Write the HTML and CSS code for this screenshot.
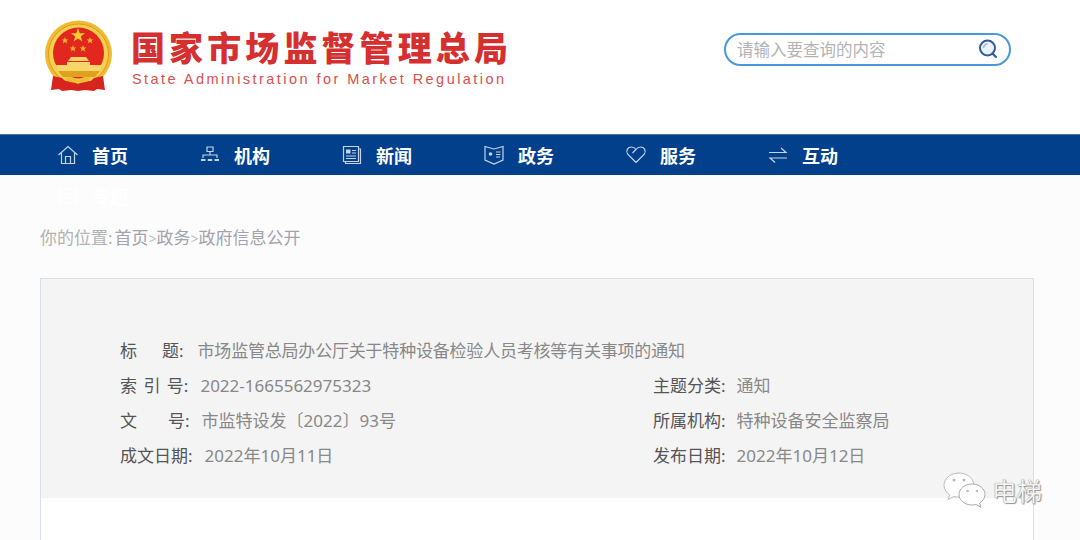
FILE: index.html
```html
<!DOCTYPE html>
<html lang="zh-CN">
<head>
    <meta charset="UTF-8">
    <title>国家市场监督管理总局</title>
    <link rel="stylesheet" href="styles.css">
</head>
<body>
    <header class="site-header">
        <div class="brand">
            <!-- national emblem, viewBox is in page coordinates -->
            <svg class="emblem" viewBox="44 19 70 74" width="70" height="74">
                <circle cx="78.500" cy="54" r="33.500" fill="#eebb33"/>
                <circle cx="78.500" cy="54" r="30" fill="#f6d04d" stroke="#d99a22" stroke-width="1"/>
                <circle cx="78.500" cy="53" r="25.500" fill="#e2271f"/>
                <polygon fill="#f8d030" points="78,28 79.700,33.200 85,33.200 80.700,36.400 82.400,41.600 78,38.400 73.600,41.600 75.300,36.400 71,33.200 76.300,33.200"/>
                <polygon fill="#f0b828" points="65,37 65.900,39.500 68.500,39.500 66.400,41.100 67.200,43.600 65,42.100 62.800,43.600 63.600,41.100 61.500,39.500 64.100,39.500"/>
                <polygon fill="#f0b828" points="90,37 90.900,39.500 93.500,39.500 91.400,41.100 92.200,43.600 90,42.100 87.800,43.600 88.600,41.100 86.500,39.500 89.100,39.500"/>
                <polygon fill="#f0b828" points="73,45 73.900,47.500 76.500,47.500 74.400,49.100 75.200,51.600 73,50.100 70.800,51.600 71.600,49.100 69.500,47.500 72.100,47.500"/>
                <polygon fill="#f0b828" points="83,45 83.900,47.500 86.500,47.500 84.400,49.100 85.200,51.600 83,50.100 80.800,51.600 81.600,49.100 79.500,47.500 82.100,47.500"/>
                <path fill="#f8d66a" d="M71 57h15l3 4h-21zM67 62h23v3h-23zM56 65h46l-2 6h-42z"/>
                <path fill="#e0a020" d="M58 71h42l-5 6h-32z"/>
                <path fill="#d8241f" d="M53 76l9 2 3 3 8 1 5 2 5-2 8-1 3-3 9-2 2 14-8-1-3 2-9-1-7 1-7-1-9 1-3-2-8 1z"/>
                <path fill="#f0bd30" d="M66 78c4-3 8 0 12 2 4-2 8-5 12-2-2 5-8 5-12 4-4 1-10 1-12-4z"/>
            </svg>
            <div class="brand-text">
                <div class="brand-cn">国家市场监督管理总局</div>
                <div class="brand-en">State Administration for Market Regulation</div>
            </div>
        </div>
        <div class="search">
            <span class="search-hint">请输入要查询的内容</span>
            <svg class="search-icon" viewBox="0 0 20 20" width="20" height="20">
                <circle cx="9.500" cy="9" r="7.500" fill="#eef3fa" stroke="#2f5c9e" stroke-width="2"/>
                <path d="M5.500 9a4 4 0 0 1 4-4" fill="none" stroke="#9db8da" stroke-width="1.500"/>
                <path d="M14.500 14.500l3.500 3.500" stroke="#2f5c9e" stroke-width="2.200" stroke-linecap="round"/>
            </svg>
        </div>
    </header>

    <nav class="nav">
        <div class="nav-list">
            <a class="nav-item" href="#">
                <svg class="nav-icon" viewBox="0 0 22 22"><path d="M1.500 11L11 2.500 20.500 11M4.500 9v10.500h13V9M8.500 19.500v-7h5v7"/></svg>
                <span>首页</span>
            </a>
            <a class="nav-item" href="#">
                <svg class="nav-icon" viewBox="0 0 22 22"><path d="M8 3h6v4.500H8zM11 7.500V11M4 14v-3h14v3"/><path class="solid" d="M2 15h4.500v2H2zM8.750 15h4.500v2h-4.500zM15.500 15H20v2h-4.500z"/></svg>
                <span>机构</span>
            </a>
            <a class="nav-item" href="#">
                <svg class="nav-icon" viewBox="0 0 22 22"><path d="M2.500 2.500h15v15h-15zM17.500 5h2v14.500h-15V17.500M5 12h10M5 14.500h10M11 6.500h4M11 9h4"/><path class="solid" d="M5 5.500h4.500v4H5z"/></svg>
                <span>新闻</span>
            </a>
            <a class="nav-item" href="#">
                <svg class="nav-icon" viewBox="0 0 22 22"><path d="M2 2.500l9 2.500 9-2.500v13.500L11 20l-9-4zM13 8h4.500M13 10.500h4.500M13 13h4"/><circle class="solid" cx="7.500" cy="10" r="1.800"/></svg>
                <span>政务</span>
            </a>
            <a class="nav-item" href="#">
                <svg class="nav-icon" viewBox="0 0 22 22"><path d="M11 18.500L2.500 10C0.500 6.500 3 3 6.500 3c2 0 3.500 1 4.500 2.500L7.500 9M11 5.500C12 4 13.500 3 15.500 3c3.500 0 6 3.500 4 7L11 18.500"/></svg>
                <span>服务</span>
            </a>
            <a class="nav-item" href="#">
                <svg class="nav-icon" viewBox="0 0 22 22"><path d="M2 8.500h17l-5-4.500M20 14H3l5 4.500"/></svg>
                <span>互动</span>
            </a>
            <a class="nav-item nav-item-hidden" href="#">
                <svg class="nav-icon" viewBox="0 0 22 22"><path d="M3 4h16v14H3zM6 9h10M6 13h10"/></svg>
                <span>专题</span>
            </a>
        </div>
    </nav>

    <main class="main">
        <div class="crumbs">
            <span class="crumbs-label">你的位置:</span><a href="#">首页</a><span class="crumbs-sep">&gt;</span><a href="#">政务</a><span class="crumbs-sep">&gt;</span><a href="#">政府信息公开</a>
        </div>

        <section class="doc">
            <div class="doc-meta">
                <div class="meta-row meta-title">
                    <span class="meta-key">标<i class="gap-wide"></i>题:</span><span class="meta-val">市场监管总局办公厅关于特种设备检验人员考核等有关事项的通知</span>
                </div>
                <div class="meta-row">
                    <span class="meta-key meta-key-spaced">索 引 号:</span><span class="meta-val">2022-1665562975323</span>
                </div>
                <div class="meta-row meta-side">
                    <span class="meta-key">主题分类:</span><span class="meta-val">通知</span>
                </div>
                <div class="meta-row">
                    <span class="meta-key">文<i class="gap-wider"></i>号:</span><span class="meta-val">市监特设发〔2022〕93号</span>
                </div>
                <div class="meta-row meta-side">
                    <span class="meta-key">所属机构:</span><span class="meta-val">特种设备安全监察局</span>
                </div>
                <div class="meta-row">
                    <span class="meta-key">成文日期:</span><span class="meta-val">2022年10月11日</span>
                </div>
                <div class="meta-row meta-side">
                    <span class="meta-key">发布日期:</span><span class="meta-val">2022年10月12日</span>
                </div>
            </div>
        </section>
    </main>

    <!-- wechat watermark -->
    <div class="watermark">
        <svg class="watermark-icon" viewBox="0 0 44 38" width="44" height="38">
            <path fill="#fff" stroke="#bbb" d="M16 1C7.700 1 1 6.500 1 13.300c0 4 2.300 7.400 5.800 9.700L5 27.500l6-3c1.600.4 3.300.6 5 .6 8.300 0 15-5.300 15-11.800S24.300 1 16 1z"/>
            <path fill="#fff" stroke="#aaa" d="M29 12c-7.200 0-13 4.700-13 10.500S21.800 33 29 33c1.400 0 2.800-.2 4-.5l5 2.800-1.500-4.300c3.300-2 5.500-5 5.500-8.500C42 16.700 36.200 12 29 12z"/>
            <circle cx="11" cy="8" r="1.500" fill="#bbb"/><circle cx="21" cy="8" r="1.500" fill="#bbb"/>
            <circle cx="24.500" cy="19" r="1.300" fill="#bbb"/><circle cx="34" cy="19" r="1.300" fill="#bbb"/>
        </svg>
        <span class="watermark-text">电梯</span>
    </div>
</body>
</html>
```

FILE: styles.css
```css
* {
    box-sizing: border-box;
}
html, body {
    height: 100%;
}
body {
    margin: 0;
    overflow: hidden;
    position: relative;
    background-color: #fcfcfc;
    font-family: "Noto Sans", "Noto Sans CJK SC", sans-serif;
    color: #555;
}
a {
    color: inherit;
    text-decoration: none;
}
.site-header {
    height: 134px;
    background-color: #fff;
    display: flex;
    justify-content: space-between;
    padding: 19px 69px 0 44px;
}
.brand {
    display: flex;
    align-items: flex-start;
}
.emblem {
    flex: none;
}
.brand-text {
    margin-left: 17px;
    padding-top: 5px;
}
.brand-cn {
    font-family: "Noto Sans CJK SC", sans-serif;
    font-size: 34px;
    font-weight: 900;
    line-height: 46px;
    letter-spacing: 4.100px;
    white-space: nowrap;
    color: #d62f30;
}
.brand-en {
    margin-left: 1px;
    font-family: "Liberation Sans", sans-serif;
    font-size: 14.500px;
    line-height: 18px;
    letter-spacing: 2.450px;
    white-space: nowrap;
    color: #d9504c;
}
.search {
    width: 287px;
    height: 33px;
    margin-top: 14px;
    padding: 0 11px 2px 11px;
    display: flex;
    align-items: center;
    justify-content: space-between;
    border: 2px solid #4a98dc;
    border-radius: 17px;
    background-color: #fff;
}
.search-hint {
    font-size: 16.500px;
    color: #b4b4b4;
}
.nav {
    height: 41px;
    background-color: #03408c;
    border-top: 1px solid #4a76ad;
}
.nav-list {
    width: 909px;
    padding-left: 57px;
    display: flex;
    flex-wrap: wrap;
}
.nav-item {
    width: 142px;
    height: 42px;
    margin-top: -1px;
    display: flex;
    align-items: center;
    font-size: 18px;
    font-weight: 700;
    color: #fff;
}
.nav-item span {
    margin-left: 13px;
}
.nav-icon {
    width: 22px;
    height: 22px;
    fill: none;
    stroke: #c5d3e6;
    stroke-width: 1.200;
}
.nav-icon .solid {
    fill: #c5d3e6;
    stroke: none;
}
.nav-item-hidden .nav-icon {
    stroke: #fff;
}
.main {
    padding: 0 46px 0 40px;
}
.crumbs {
    padding-top: 50px;
    height: 103px;
    font-size: 17px;
    line-height: 25px;
    color: #a0a4ae;
    white-space: nowrap;
}
.crumbs-label {
    margin-right: 2px;
    color: #b2b2b2;
}
.crumbs-sep {
    font-size: 14px;
    color: #b8bcc6;
}
.doc {
    height: 262px;
    border: 1px solid #d8deee;
    border-bottom: none;
    background-color: #fff;
}
.doc-meta {
    height: 219px;
    padding: 54px 60px 0 79px;
    background-color: #f4f4f4;
    display: grid;
    grid-template-columns: 533px 1fr;
    grid-auto-rows: 35px;
    font-size: 17px;
    line-height: 35px;
}
.meta-row {
    white-space: nowrap;
}
.meta-title {
    grid-column: 1 / -1;
}
.meta-title .meta-val {
    letter-spacing: -0.200px;
}
.meta-key {
    color: #555;
    margin-right: 12px;
}
.meta-title .meta-key {
    margin-right: 14px;
}
.meta-side .meta-key {
    margin-right: 11px;
}
.meta-key-spaced {
    word-spacing: 2px;
}
.gap-wide {
    display: inline-block;
    width: 25px;
}
.gap-wider {
    display: inline-block;
    width: 31px;
}
.meta-val {
    color: #888;
}
.watermark {
    position: absolute;
    left: 943px;
    top: 472px;
    display: flex;
    align-items: center;
}
.watermark-text {
    margin-left: 5px;
    font-size: 25px;
    line-height: 38px;
    color: #f4f4f4;
    text-shadow: 0 0 1px #666, 1px 1px 1px #999;
}
```
